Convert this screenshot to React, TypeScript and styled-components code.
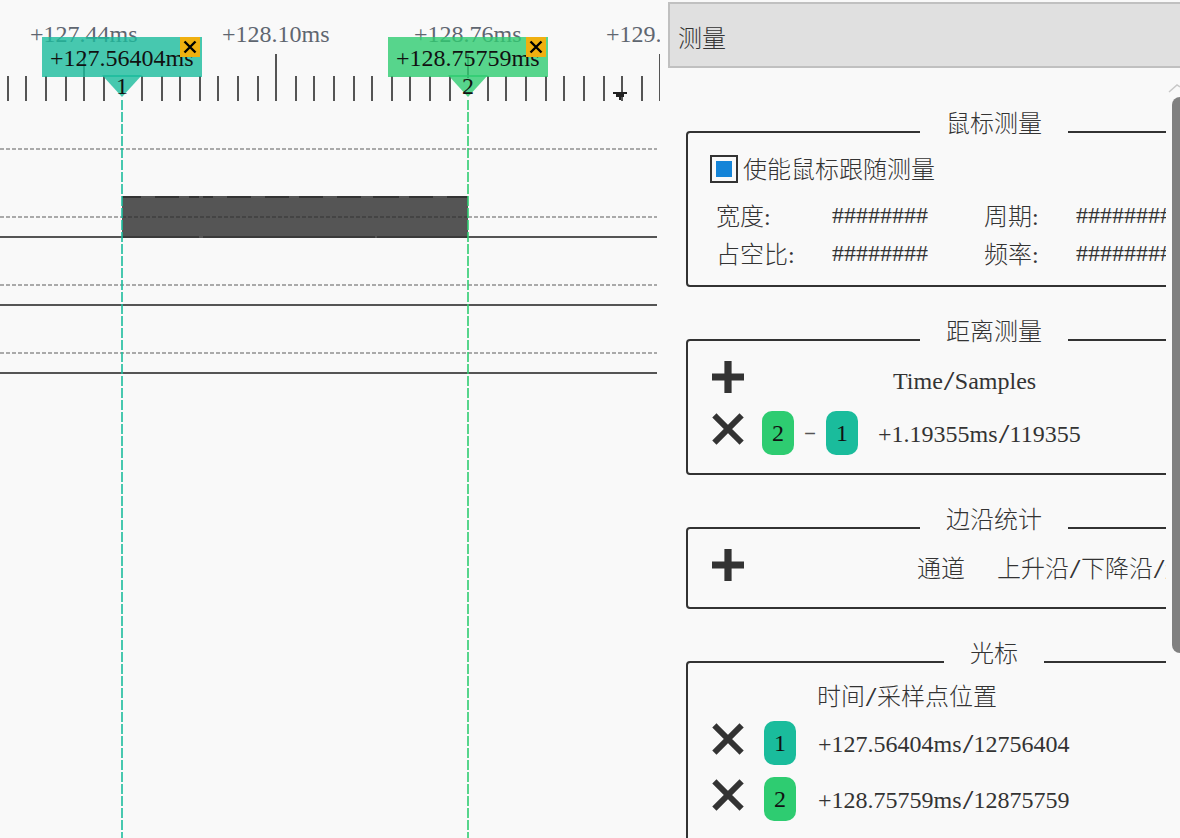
import React from "react";
import styled, { createGlobalStyle } from "styled-components";

const Global = createGlobalStyle`
  html, body { margin: 0; padding: 0; background: #f9f9f9; }
  body {
    font-family: "Liberation Serif", "Noto Sans CJK SC", serif;
    font-size: 24px;
    font-weight: 300;
    color: #333;
  }
`;

const Page = styled.div`
  display: flex;
  width: 1180px;
  height: 838px;
  overflow: hidden;
  background: #f9f9f9;
`;

const Timeline = styled.section`
  position: relative;
  flex: none;
  width: 668px;
  height: 838px;
`;

const Trace = styled.svg`
  display: block;
`;

const RulerLabels = styled.div`
  position: absolute;
  left: 0;
  top: 20px;
  width: 660px;
  height: 30px;
  overflow: hidden;
`;

const RulerLabel = styled.span<{ $center: number }>`
  position: absolute;
  top: 0;
  left: ${(p) => p.$center - 54}px;
  line-height: 28px;
  white-space: nowrap;
  color: #5f6670;
`;

const Flag = styled.div<{ $left: number; $color: string }>`
  position: absolute;
  left: ${(p) => p.$left}px;
  top: 37px;
  width: 160px;
  height: 40px;
  box-sizing: border-box;
  padding-left: 8px;
  line-height: 42px;
  white-space: nowrap;
  color: #111;
  background: ${(p) => p.$color};
`;

const FlagClose = styled.span`
  position: absolute;
  right: 2px;
  top: 0;
  width: 20px;
  height: 20px;
  display: flex;
  align-items: center;
  justify-content: center;
  background: #f0b010;
`;

const FlagPointer = styled.div<{ $color: string }>`
  position: absolute;
  left: 60px;
  top: 38px;
  width: 40px;
  height: 22px;
  text-align: center;
  line-height: 22px;
  padding: 0;
  color: #111;
  &::before {
    content: "";
    position: absolute;
    inset: 0;
    background: ${(p) => p.$color};
    clip-path: polygon(0 0, 100% 0, 50% 100%);
  }
  & > span { position: relative; }
`;

const Panel = styled.aside`
  display: flex;
  flex-direction: column;
  flex: none;
  width: 512px;
  height: 838px;
  padding-top: 2px;
  box-sizing: border-box;
`;

const PanelHeader = styled.header`
  flex: none;
  height: 66px;
  box-sizing: border-box;
  display: flex;
  align-items: center;
  padding: 2px 0 0 8px;
  background: #e0e0e0;
  border: 2px solid #c0c0c0;
  border-right: none;
  color: #333;
`;

const PanelBody = styled.div`
  flex: 1;
  display: flex;
  min-height: 0;
`;

const ScrollArea = styled.div`
  flex: none;
  width: 498px;
  overflow: hidden;
  padding: 43px 0 0 18px;
  box-sizing: border-box;
  display: flex;
  flex-direction: column;
  gap: 32px;
`;

const ScrollTrack = styled.div`
  flex: 1;
  display: flex;
  flex-direction: column;
  align-items: flex-end;
  padding-top: 16px;
`;

const ScrollThumb = styled.div`
  width: 8px;
  height: 556px;
  margin-top: 4px;
  background: #808080;
  border-radius: 8px 0 0 8px;
`;

const Group = styled.fieldset<{ $height?: number }>`
  flex: none;
  width: 616px;
  height: ${(p) => p.$height ?? 240}px;
  margin: 0;
  padding: 0;
  box-sizing: border-box;
  border: 2px solid #333;
  border-radius: 4px;
  min-width: 0;
`;

const GroupTitle = styled.legend<{ $pad?: number }>`
  margin: 0 auto;
  padding: 1px ${(p) => p.$pad ?? 26}px 17px;
  line-height: 24px;
  height: 42px;
  box-sizing: border-box;
`;

const CheckRow = styled.label`
  display: flex;
  align-items: center;
  gap: 5px;
  height: 28px;
  margin: 2px 0 14px 22px;
`;

const CheckText = styled.span`
  padding-bottom: 4px;
`;

const CheckBox = styled.span`
  flex: none;
  width: 28px;
  height: 28px;
  box-sizing: border-box;
  border: 2px solid #333;
  display: flex;
  align-items: center;
  justify-content: center;
  &::after {
    content: "";
    width: 16px;
    height: 16px;
    background: #1484d8;
  }
`;

const ReadoutGrid = styled.div`
  display: grid;
  grid-template-columns: 116px 152px 92px auto;
  grid-auto-rows: 38px;
  align-items: center;
  margin-left: 28px;
  white-space: nowrap;
`;

const ReadoutLabel = styled.span`
  padding-bottom: 4px;
`;

const ReadoutValue = styled.span`
  padding-bottom: 2px;
`;

const Row = styled.div<{ $mt?: number }>`
  display: flex;
  align-items: center;
  height: 44px;
  margin-top: ${(p) => p.$mt ?? 0}px;
  margin-left: 24px;
  white-space: nowrap;
`;

const HeadRow = styled.div`
  display: flex;
  align-items: flex-start;
  height: 40px;
  margin-left: 24px;
  white-space: nowrap;
  line-height: 40px;
`;

const IconButton = styled.span<{ $nudge?: number }>`
  flex: none;
  display: flex;
  width: 32px;
  height: 32px;
  margin-top: ${(p) => p.$nudge ?? 0}px;
  align-self: flex-start;
`;

const Gapped = styled.span<{ $ml: number; $pt?: number }>`
  margin-left: ${(p) => p.$ml}px;
  padding-top: ${(p) => p.$pt ?? 0}px;
`;

const Badge = styled.span<{ $color: string; $ml: number }>`
  flex: none;
  width: 32px;
  height: 44px;
  margin-left: ${(p) => p.$ml}px;
  border-radius: 10px;
  background: ${(p) => p.$color};
  color: #111;
  display: flex;
  align-items: center;
  justify-content: center;
`;

const Minus = styled.span`
  flex: none;
  width: 32px;
  text-align: center;
  font-family: "Liberation Mono", monospace;
  font-weight: 400;
  color: #555;
  transform: scale(1.5, 0.8);
`;

const ColumnTitle = styled.div`
  height: 26px;
  line-height: 26px;
  margin: 1px 0 11px 129px;
  white-space: nowrap;
`;

const SlashMark = styled.span`
  display: inline-block;
  width: 12px;
  text-align: center;
  transform: scale(1.6, 1.1);
`;

const Slashed: React.FC<{ text: string }> = ({ text }) => (
  <>
    {text.split("/").map((part, i) => (
      <React.Fragment key={i}>
        {i > 0 && <SlashMark>/</SlashMark>}
        {part}
      </React.Fragment>
    ))}
  </>
);

const PlusIcon = () => (
  <svg width="32" height="32" viewBox="0 0 32 32">
    <path d="M12.4 0h7.2v12.4H32v7.2H19.6V32h-7.2V19.6H0v-7.2h12.4z" fill="#333" />
  </svg>
);

const CrossIcon = () => (
  <svg width="32" height="32" viewBox="0 0 32 32">
    <path d="M4.5 4.5L27.5 27.5M27.5 4.5L4.5 27.5" stroke="#333" strokeWidth="6" strokeLinecap="square" fill="none" />
  </svg>
);

const SmallCross = () => (
  <svg width="14" height="14" viewBox="0 0 14 14">
    <path d="M1.5 1.5L12.5 12.5M12.5 1.5L1.5 12.5" stroke="#000" strokeWidth="2.4" fill="none" />
  </svg>
);

const TEAL = "rgba(26,188,156,0.8)";
const GREEN = "rgba(46,204,113,0.8)";

const minorTicks = [8, 26, 46, 66, 104, 142, 162, 180, 200, 218, 238, 258, 296, 314, 334, 354, 372, 392, 410, 430, 450, 488, 506, 526, 546, 564, 584, 604, 622, 642];
const majorTicks = [84, 276];
const topDashes: [number, number][] = [[122, 141], [155, 179], [189, 199], [203, 213], [227, 251], [265, 289], [299, 323], [337, 361], [373, 399], [409, 433], [447, 468]];
const bottomDashes: [number, number][] = [[122, 199], [203, 375], [377, 468]];

const Waveform = () => (
  <Trace width="668" height="838" viewBox="0 0 668 838" shapeRendering="crispEdges">
    {minorTicks.map((x) => (
      <rect key={x} x={x - 1} y={76} width={2} height={25} fill="#555" />
    ))}
    {majorTicks.map((x) => (
      <rect key={x} x={x - 1} y={54} width={2} height={47} fill="#555" />
    ))}
    <rect x={467} y={54} width={2} height={24} fill="#555" />
    <rect x={659} y={54} width={1} height={47} fill="#555" />
    <polygon points="613,92 627,92 627,94 624,94 624,97 621,97 621,100 619,100 619,97 616,97 616,94 613,94" fill="#222" />
    {[149, 217, 285, 353].map((y) => (
      <line key={y} x1={0} x2={657} y1={y} y2={y} stroke="#aaa" strokeWidth={2} strokeDasharray="4 2" />
    ))}
    {[237, 305, 373].map((y) => (
      <rect key={y} x={0} y={y - 1} width={657} height={2} fill="#555" />
    ))}
    <rect x={122} y={196} width={346} height={42} fill="#555" />
    <line x1={122} x2={468} y1={217} y2={217} stroke="#444" strokeWidth={2} strokeDasharray="4 2" />
    {topDashes.map(([a, b]) => (
      <rect key={a} x={a} y={196} width={b - a} height={2} fill="#333" />
    ))}
    {bottomDashes.map(([a, b]) => (
      <rect key={a} x={a} y={236} width={b - a} height={2} fill="#3a3a3a" />
    ))}
    <line x1={122} x2={122} y1={100} y2={838} stroke={TEAL} strokeWidth={2} strokeDasharray="10 2" />
    <line x1={468} x2={468} y1={100} y2={838} stroke={GREEN} strokeWidth={2} strokeDasharray="10 2" />
  </Trace>
);

const Cursor: React.FC<{ left: number; color: string; time: string; index: number }> = ({ left, color, time, index }) => (
  <Flag $left={left} $color={color}>
    {time}
    <FlagClose>
      <SmallCross />
    </FlagClose>
    <FlagPointer $color={color}>
      <span>{index}</span>
    </FlagPointer>
  </Flag>
);

export default function App() {
  return (
    <Page>
      <Global />
      <Timeline>
        <Waveform />
        <RulerLabels>
          <RulerLabel $center={84}>+127.44ms</RulerLabel>
          <RulerLabel $center={276}>+128.10ms</RulerLabel>
          <RulerLabel $center={468}>+128.76ms</RulerLabel>
          <RulerLabel $center={660}>+129.</RulerLabel>
        </RulerLabels>
        <Cursor left={42} color={TEAL} time="+127.56404ms" index={1} />
        <Cursor left={388} color={GREEN} time="+128.75759ms" index={2} />
      </Timeline>
      <Panel>
        <PanelHeader>测量</PanelHeader>
        <PanelBody>
          <ScrollArea>
            <Group $height={176}>
              <GroupTitle>鼠标测量</GroupTitle>
              <CheckRow>
                <CheckBox />
                <CheckText>使能鼠标跟随测量</CheckText>
              </CheckRow>
              <ReadoutGrid>
                <ReadoutLabel>宽度:</ReadoutLabel>
                <ReadoutValue>########</ReadoutValue>
                <ReadoutLabel>周期:</ReadoutLabel>
                <ReadoutValue>########</ReadoutValue>
                <ReadoutLabel>占空比:</ReadoutLabel>
                <ReadoutValue>########</ReadoutValue>
                <ReadoutLabel>频率:</ReadoutLabel>
                <ReadoutValue>########</ReadoutValue>
              </ReadoutGrid>
            </Group>
            <Group $height={156}>
              <GroupTitle>距离测量</GroupTitle>
              <HeadRow>
                <IconButton><PlusIcon /></IconButton>
                <Gapped $ml={149}><Slashed text="Time/Samples" /></Gapped>
              </HeadRow>
              <Row $mt={10}>
                <IconButton $nudge={2}><CrossIcon /></IconButton>
                <Badge $color="#2ecc71" $ml={18}>2</Badge>
                <Minus>-</Minus>
                <Badge $color="#1abc9c" $ml={0}>1</Badge>
                <Gapped $ml={20} $pt={2}><Slashed text="+1.19355ms/119355" /></Gapped>
              </Row>
            </Group>
            <Group $height={102}>
              <GroupTitle>边沿统计</GroupTitle>
              <HeadRow>
                <IconButton><PlusIcon /></IconButton>
                <Gapped $ml={173}>通道</Gapped>
                <Gapped $ml={32}><Slashed text="上升沿/下降沿/边沿" /></Gapped>
              </HeadRow>
            </Group>
            <Group $height={240}>
              <GroupTitle>光标</GroupTitle>
              <ColumnTitle><Slashed text="时间/采样点位置" /></ColumnTitle>
              <Row>
                <IconButton $nudge={2}><CrossIcon /></IconButton>
                <Badge $color="#1abc9c" $ml={20}>1</Badge>
                <Gapped $ml={22} $pt={2}><Slashed text="+127.56404ms/12756404" /></Gapped>
              </Row>
              <Row $mt={12}>
                <IconButton $nudge={2}><CrossIcon /></IconButton>
                <Badge $color="#2ecc71" $ml={20}>2</Badge>
                <Gapped $ml={22} $pt={2}><Slashed text="+128.75759ms/12875759" /></Gapped>
              </Row>
            </Group>
          </ScrollArea>
          <ScrollTrack>
            <svg width="12" height="9" viewBox="0 0 12 9">
              <path d="M1 8L9 1L12 3" stroke="#c8c8c8" strokeWidth="1.5" fill="none" />
            </svg>
            <ScrollThumb />
          </ScrollTrack>
        </PanelBody>
      </Panel>
    </Page>
  );
}
